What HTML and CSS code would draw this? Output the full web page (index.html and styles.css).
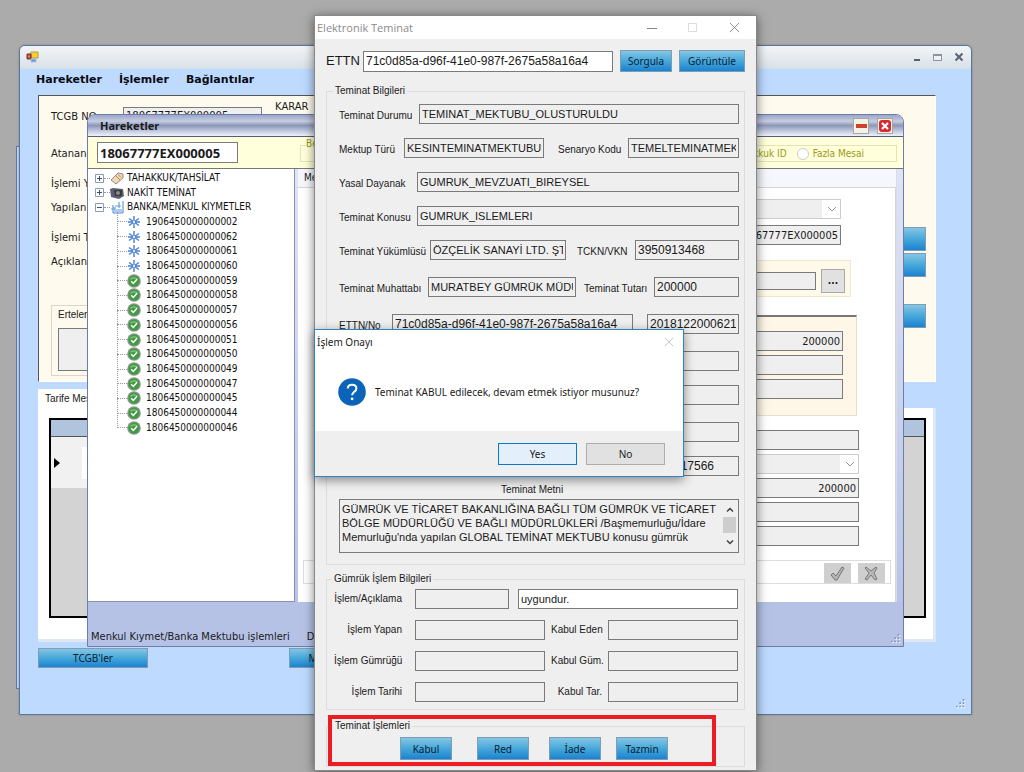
FILE: index.html
```html
<!DOCTYPE html>
<html lang="tr">
<head>
<meta charset="utf-8">
<title>Elektronik Teminat</title>
<link rel="stylesheet" href="styles.css">
</head>
<body>
<svg class="sprite" aria-hidden="true">
  <symbol id="star" viewBox="0 0 14 14"><path d="M7 1v12M2 3.500l10 7M2 10.500l10-7M1 7h12" stroke="#4a7fd0" stroke-width="1.400" fill="none"/><circle cx="7" cy="7" r="1.200" fill="#dfeafc"/></symbol>
  <symbol id="ok" viewBox="0 0 14 14"><circle cx="7" cy="7" r="6.800" fill="#8a968b"/><circle cx="7" cy="7" r="5.500" fill="#3f9a43"/><path d="M3.500 5.400a4 3 0 0 1 7 0" stroke="#8ccb8a" stroke-width="1.400" fill="none"/><path d="M4.200 7.200l2.100 2.200 3.700-4.200" stroke="#fff" stroke-width="1.500" fill="none"/></symbol>
  <symbol id="grip" viewBox="0 0 12 12"><g fill="#fff"><path d="M9 1h2v2H9zM5 5h2v2H5zM9 5h2v2H9zM1 9h2v2H1zM5 9h2v2H5zM9 9h2v2H9z"/></g><g fill="#7f93b8"><path d="M8 0h2v2H8zM4 4h2v2H4zM8 4h2v2H8zM0 8h2v2H0zM4 8h2v2H4zM8 8h2v2H8z"/></g></symbol>
  <symbol id="close" viewBox="0 0 12 12"><path d="M1 1l10 10M11 1L1 11" stroke="currentColor" fill="none"/></symbol>
</svg>
<div class="desktop">
  <div class="ghost"></div>

  <section class="win main">
    <header class="main-title">
      <svg width="13" height="12" viewBox="0 0 13 12"><path d="M5 1h7v6H5z" fill="#f5cf3a" stroke="#b99a35"/><path d="M1 3h4v5H1z" fill="#b33a2c" stroke="#7d3a34"/><path d="M2.500 4.500h1v2h-1z" fill="#f4d5cd"/><path d="M5 8h5v3H5z" fill="#5b9bea" stroke="#b0bfd4"/></svg>
      <span class="spacer"></span>
      <button class="bare" aria-label="Küçült"><svg width="10" height="10" viewBox="0 0 10 10"><path d="M2 8h6" stroke="#596273" stroke-width="2"/></svg></button>
      <button class="bare" aria-label="Büyüt"><svg width="10" height="10" viewBox="0 0 10 10"><path d="M.5 2.500h8v6h-8z" fill="#eef1f4" stroke="#8d939e"/><path d="M0 3h9" stroke="#8d939e" stroke-width="2"/></svg></button>
      <button class="bare" aria-label="Kapat"><svg width="10" height="10" viewBox="0 0 10 10"><path d="M1.500 1.500l7 7M8.500 1.500l-7 7" stroke="#596273" stroke-width="2"/></svg></button>
    </header>
    <nav class="menu"><a href="#">Hareketler</a><a href="#">İşlemler</a><a href="#">Bağlantılar</a></nav>
    <div class="main-body">
      <div class="decl">
        <div class="decl-fields">
          <div class="decl-row"><label for="tcgb">TCGB NO</label><input id="tcgb" value="18067777EX000005" readonly><span class="karar">KARAR</span></div>
          <label class="g22">Atanan</label>
          <label class="g16">İşlemi Y</label>
          <label class="g10">Yapılan</label>
          <label class="g16">İşlemi T</label>
          <label class="g10">Açıklan</label>
          <div class="delayed"><label for="ert">Ertelen</label><textarea id="ert" readonly></textarea></div>
        </div>
        <div class="decl-actions"><button class="blue" aria-label="Ara"></button><button class="blue" aria-label="Seç"></button><button class="blue last" aria-label="Tamam"></button></div>
      </div>
      <div class="tabs"><button class="tab">Tarife Mes</button></div>
      <div class="tabpage">
        <div class="gridbox"><div class="gridhead"></div><div class="gridrow"><svg width="6" height="10" viewBox="0 0 6 10"><path d="M0 0l6 5-6 5z"/></svg><span class="cell">1<br>1</span></div></div>
      </div>
      <div class="main-actions"><button class="blue">TCGB'ler</button><button class="blue">M</button></div>
    </div>
    <svg class="grip main-grip" width="10" height="10"><use href="#grip"/></svg>
  </section>

  <section class="win moves">
    <header class="moves-title"><h2>Hareketler</h2>
      <button class="cap" aria-label="Küçült"><svg width="11" height="4" viewBox="0 0 11 4"><path d="M0 0h11v4H0z" fill="#d0412c"/></svg></button>
      <button class="cap" aria-label="Kapat"><svg width="12" height="12" viewBox="0 0 12 12"><rect width="12" height="12" rx="3" fill="#d92a34"/><path d="M3 3l6 6M9 3L3 9" stroke="#fff" stroke-width="2.200"/></svg></button>
    </header>
    <div class="search"><input aria-label="Beyanname No" value="18067777EX000005">
      <div class="options"><span class="options-legend">Be</span><label><input type="radio" name="k" disabled>Tahakkuk ID</label><label><input type="radio" name="k" disabled>Fazla Mesai</label></div>
    </div>
    <div class="split">
      <div class="treebox"><ul class="tree">
        <li><svg class="pm" viewBox="0 0 9 9"><path d="M.5.500h8v8h-8z" fill="#fff" stroke="#8f9bb0"/><path d="M2 4.500h5M4.500 2v5" stroke="#35507c"/></svg><i></i><svg class="ic" viewBox="0 0 14 14"><path d="M1 9l7-7 5 1v4l-7 6z" fill="#f1d8b4" stroke="#8b8a94"/><path d="M6 5l4 4M8 3.500l3 3" stroke="#c18848"/></svg>TAHAKKUK/TAHSİLAT</li>
        <li><svg class="pm" viewBox="0 0 9 9"><path d="M.5.500h8v8h-8z" fill="#fff" stroke="#8f9bb0"/><path d="M2 4.500h5M4.500 2v5" stroke="#35507c"/></svg><i></i><svg class="ic" viewBox="0 0 14 14"><path d="M0 3l3-1 10 1 1 7-5 3-8-2z" fill="#5a5f77"/><path d="M4 4h8v6H5z" fill="#3b3a3c"/><circle cx="8" cy="7" r="2" fill="#8d8b86"/></svg>NAKİT TEMİNAT</li>
        <li><svg class="pm" viewBox="0 0 9 9"><path d="M.5.500h8v8h-8z" fill="#fff" stroke="#8f9bb0"/><path d="M2 4.500h5" stroke="#35507c"/></svg><i></i><svg class="ic" viewBox="0 0 14 14"><path d="M3 5v8h10V1M9 2v6M6 8H3" fill="none" stroke="#4c86cf"/><path d="M4 9h8v3H4z" fill="#a9cbf5"/><path d="M1 9h4M5 6h6" stroke="#6b9cdc"/></svg>BANKA/MENKUL KIYMETLER</li>
        <li class="branch"><ul>
          <li><i></i><svg class="ic"><use href="#star"/></svg>1906450000000002</li>
          <li><i></i><svg class="ic"><use href="#star"/></svg>1806450000000062</li>
          <li><i></i><svg class="ic"><use href="#star"/></svg>1806450000000061</li>
          <li><i></i><svg class="ic"><use href="#star"/></svg>1806450000000060</li>
          <li><i></i><svg class="ic"><use href="#ok"/></svg>1806450000000059</li>
          <li><i></i><svg class="ic"><use href="#ok"/></svg>1806450000000058</li>
          <li><i></i><svg class="ic"><use href="#ok"/></svg>1806450000000057</li>
          <li><i></i><svg class="ic"><use href="#ok"/></svg>1806450000000056</li>
          <li><i></i><svg class="ic"><use href="#ok"/></svg>1806450000000051</li>
          <li><i></i><svg class="ic"><use href="#ok"/></svg>1806450000000050</li>
          <li><i></i><svg class="ic"><use href="#ok"/></svg>1806450000000049</li>
          <li><i></i><svg class="ic"><use href="#ok"/></svg>1806450000000047</li>
          <li><i></i><svg class="ic"><use href="#ok"/></svg>1806450000000045</li>
          <li><i></i><svg class="ic"><use href="#ok"/></svg>1806450000000044</li>
          <li><i></i><svg class="ic"><use href="#ok"/></svg>1806450000000046</li>
        </ul></li>
      </ul></div>
      <div class="detail">
        <div class="detail-head">Me</div>
        <div class="detail-page">
          <div class="block first"><select aria-label="Tür" disabled><option></option></select><input aria-label="Beyanname" value="18067777EX000005" readonly></div>
          <div class="pick"><input aria-label="Banka" readonly><button>...</button></div>
          <div class="block sums"><input aria-label="Tutar" value="200000" readonly><input aria-label="Kullanılan" readonly><input aria-label="Kalan" readonly></div>
          <div class="block lower"><input aria-label="Referans" readonly><select aria-label="Döviz" disabled><option></option></select><input aria-label="Toplam" value="200000" readonly><input aria-label="Tarih" readonly><input aria-label="Not" readonly></div>
          <div class="confirm">
            <button aria-label="Onayla"><svg width="15" height="15" viewBox="0 0 15 15"><path d="M1 9l2-2 3 3 6-9 2 1-7 12H5z" fill="#b4b4b4" stroke="#777"/></svg></button>
            <button aria-label="Vazgeç"><svg width="15" height="15" viewBox="0 0 15 15"><path d="M2 1l5 4 5-4 1 1-3 5 3 6-2 1-4-5-4 5-2-1 4-6-4-5z" fill="#b8b8b8" stroke="#777"/></svg></button>
          </div>
        </div>
      </div>
    </div>
    <footer class="moves-foot"><span>Menkul Kıymet/Banka Mektubu işlemleri</span><span>Durum</span></footer>
    <svg class="grip moves-grip" width="10" height="10"><use href="#grip"/></svg>
  </section>

  <section class="win bond">
    <header class="bond-title"><h2>Elektronik Teminat</h2>
      <button class="bare" aria-label="Küçült"><svg width="10" height="10" viewBox="0 0 10 10"><path d="M0 5.500h10" stroke="#888"/></svg></button>
      <button class="bare" aria-label="Büyüt"><svg width="10" height="10" viewBox="0 0 10 10"><path d="M.5.500h8v8h-8z" stroke="#ddd" fill="none"/></svg></button>
      <button class="bare grey" aria-label="Kapat"><svg width="11" height="11"><use href="#close"/></svg></button>
    </header>
    <div class="bond-body">
      <div class="ettn"><label for="ettn">ETTN</label><input id="ettn" value="71c0d85a-d96f-41e0-987f-2675a58a16a4"><button class="blue">Sorgula</button><button class="blue wide">Görüntüle</button></div>
      <fieldset class="info"><legend>Teminat Bilgileri</legend>
        <div class="row"><label class="l80" for="f1">Teminat Durumu</label><input class="caps" id="f1" value="TEMINAT_MEKTUBU_OLUSTURULDU" readonly></div>
        <div class="row"><label class="l65" for="f2">Mektup Türü</label><input class="caps" id="f2" value="KESINTEMINATMEKTUBU" readonly><label class="second l70" for="f3">Senaryo Kodu</label><input class="caps w111" id="f3" value="TEMELTEMINATMEKTUBU" readonly></div>
        <div class="row"><label class="l78" for="f4">Yasal Dayanak</label><input class="caps" id="f4" value="GUMRUK_MEVZUATI_BIREYSEL" readonly></div>
        <div class="row"><label class="l78" for="f5">Teminat Konusu</label><input class="caps" id="f5" value="GUMRUK_ISLEMLERI" readonly></div>
        <div class="row"><label class="l91" for="f6">Teminat Yükümlüsü</label><input class="caps" id="f6" value="ÖZÇELİK SANAYİ LTD. ŞTİ" readonly><label class="mid l58" for="f7">TCKN/VKN</label><input class="w104" id="f7" value="3950913468" readonly></div>
        <div class="row far"><label class="l89" for="f8">Teminat Muhattabı</label><input class="caps" id="f8" value="MURATBEY GÜMRÜK MÜDÜRLÜĞÜ" readonly><label class="near l70" for="f9">Teminat Tutarı</label><input class="w85" id="f9" value="200000" readonly></div>
        <div class="row far"><label class="l53" for="f10">ETTN/No</label><input id="f10" value="71c0d85a-d96f-41e0-987f-2675a58a16a4" readonly><input class="second w92" aria-label="No" value="20181220006210" readonly></div>
        <div class="row far"><input aria-label="Başlangıç" readonly></div>
        <div class="row"><input aria-label="Bitiş" readonly></div>
        <div class="row far"><input aria-label="Süre" readonly></div>
        <div class="row"><input class="code" aria-label="Referans" value="17566" readonly></div>
        <label class="text-label" for="txt">Teminat Metni</label>
        <div class="text-wrap"><textarea id="txt" readonly>GÜMRÜK VE TİCARET BAKANLIĞINA BAĞLI TÜM GÜMRÜK VE TİCARET
BÖLGE MÜDÜRLÜĞÜ VE BAĞLI MÜDÜRLÜKLERİ /Başmemurluğu/İdare
Memurluğu'nda yapılan GLOBAL TEMİNAT MEKTUBU konusu gümrük</textarea><div class="bar"><svg width="8" height="5" viewBox="0 0 8 5"><path d="M1 4.500l3-3 3 3" stroke="#444" stroke-width="1.500" fill="none"/></svg><b></b><svg width="8" height="5" viewBox="0 0 8 5"><path d="M1 .5l3 3 3-3" stroke="#444" stroke-width="1.500" fill="none"/></svg></div></div>
      </fieldset>
      <fieldset class="customs"><legend>Gümrük İşlem Bilgileri</legend>
        <div class="crow note"><label for="c1">İşlem/Açıklama</label><input id="c1" readonly><input class="edit" aria-label="Açıklama" value="uygundur."></div>
        <div class="crow"><label for="c2">İşlem Yapan</label><input id="c2" readonly><label for="c3">Kabul Eden</label><input id="c3" readonly></div>
        <div class="crow"><label for="c4">İşlem Gümrüğü</label><input id="c4" readonly><label for="c5">Kabul Güm.</label><input id="c5" readonly></div>
        <div class="crow"><label for="c6">İşlem Tarihi</label><input id="c6" readonly><label for="c7">Kabul Tar.</label><input id="c7" readonly></div>
      </fieldset>
      <fieldset class="ops"><legend>Teminat İşlemleri</legend>
        <div class="ops-row"><button class="blue">Kabul</button><button class="blue">Red</button><button class="blue">İade</button><button class="blue">Tazmin</button></div>
        <div class="marker"></div>
      </fieldset>
    </div>
  </section>

  <section class="win confirm-box" role="dialog" aria-label="İşlem Onayı">
    <header><h2>İşlem Onayı</h2><button class="bare pale" aria-label="Kapat"><svg width="10" height="10"><use href="#close"/></svg></button></header>
    <div class="message"><svg width="28" height="28" viewBox="0 0 28 28"><circle cx="14" cy="14" r="13.800" fill="#0b64b8"/><path d="M9.800 10.500c0-5 8.600-5 8.600 0 0 3.300-4.300 3.200-4.300 6.800" fill="none" stroke="#fff" stroke-width="2"/><circle cx="14.100" cy="20.800" r="1.400" fill="#fff"/></svg><p>Teminat KABUL edilecek, devam etmek istiyor musunuz?</p></div>
    <div class="answer"><button class="yes">Yes</button><button>No</button></div>
  </section>
</div>
</body>
</html>
```
FILE: styles.css
```css
* { box-sizing: border-box; }
body { margin: 0; font: 10px/14px "Liberation Sans", Arial, sans-serif; color: #1a1a1a; }
button, input, textarea, select { font: inherit; color: inherit; margin: 0; border-radius: 0; }
h2, p, ul { margin: 0; padding: 0; }
li { list-style: none; }
.sprite { position: absolute; width: 0; height: 0; }
svg { flex: none; display: block; }
.desktop { position: relative; min-height: 100vh; background: #ababab; overflow: hidden; }
.win { position: absolute; }
.bare { background: none; border: 0; padding: 0; }
input, textarea { border: 1px solid #7a7a7a; background: #efefef; padding: 0 2px; min-width: 0; outline: 0; }
.blue { border: 1px solid #7d9db5; background: linear-gradient(#86c5e4, #46a8da 50%, #1c82d0); color: #0c2034; padding: 0; font-family: "Noto Sans", sans-serif; font-size: 10px; }
.spacer { flex: 1; }
.grip { position: absolute; right: 2px; bottom: 2px; }
.main-grip { right: 5px; bottom: 5px; }

/* outer frame behind the main window */
.ghost { position: absolute; left: 16px; top: 146px; width: 8px; height: 543px; background: #bedaff; border: 1px solid #5d7699; }

/* main window */
.main { left: 19px; right: 52px; top: 45px; background: #bedaff; border: 1px solid #5d7699; border-radius: 6px 6px 0 0; box-shadow: 0 0 2px #777; font-family: "DejaVu Sans", sans-serif; }
.main-title { display: flex; align-items: center; height: 23px; padding: 0 7px 0 6px; gap: 11px; background: linear-gradient(#f2f5f7, #d9e1e7); border-bottom: 1px solid #cfe0ef; border-radius: 5px 5px 0 0; }
.menu { display: flex; gap: 17px; padding: 4px 16px 9px; }
.menu a { color: #0a0a14; text-decoration: none; font-size: 11px; font-weight: bold; line-height: 13px; }
.main-body { padding: 0 35px 46px 18px; }
.decl { display: flex; justify-content: space-between; min-height: 287px; background: #fffaee; border: 1px solid #fff; border-top-color: #555; border-left-color: #555; padding: 11px 9px 4px 12px; }
.decl-fields { display: flex; flex-direction: column; width: 300px; }
.decl-row { display: flex; height: 18px; }
.decl-row label { width: 72px; padding-top: 3px; }
.decl-row input { width: 139px; }
.karar { margin-top: -6px; padding-left: 13px; line-height: 12px; }
.g22 { margin-top: 22px; }
.g16 { margin-top: 16px; }
.g10 { margin-top: 10px; }
.delayed { display: flex; flex-direction: column; margin-top: 36px; padding: 2px 6px 4px; gap: 6px; height: 71px; border: 1px solid #ddd6c8; font-family: "Liberation Sans", sans-serif; }
.delayed textarea { flex: 1; resize: none; }
.decl-actions { display: flex; flex-direction: column; gap: 2px; padding-top: 120px; }
.decl-actions .blue { width: 90px; height: 24px; }
.decl-actions .last { margin-top: 25px; }
.tabs { display: flex; padding-top: 7px; height: 26px; }
.tab { border: 0; background: #fff; width: 150px; text-align: left; padding: 0 7px; font-family: "Liberation Sans", sans-serif; }
.tabpage { background: #fff; border-right: 3px solid #dfe7f2; border-bottom: 3px solid #dfe7f2; padding: 10px 7px 21px 11px; }
.gridbox { height: 200px; border: 2px solid #000; background: #d3d3d3; }
.gridhead { height: 17px; background: #b0c4de; border-bottom: 1px solid #555; }
.gridrow { display: flex; align-items: center; gap: 22px; height: 51px; width: 120px; padding-left: 3px; background: #f1f1f1; }
.cell { background: #fff; padding-left: 4px; line-height: 16px; }
.main-actions { display: flex; gap: 141px; padding-top: 6px; }
.main-actions .blue { width: 110px; height: 20px; }
.main-actions .blue + .blue { width: 48px; }

/* movements window */
.moves { left: 87px; right: 120px; top: 114px; background: linear-gradient(#e3e8f6, #b5c0e4); border: 1px solid #6b7da8; border-radius: 8px 8px 0 0; font-family: "DejaVu Sans Condensed", "DejaVu Sans", sans-serif; }
.moves-title { display: flex; align-items: center; gap: 8px; height: 22px; padding: 0 10px 0 12px; border-bottom: 1px solid #555d78; border-radius: 7px 7px 0 0; background: linear-gradient(#9ca6c8, #c6cde2 30%, #8d97b8 50%, #c9d0e6 80%, #eef1fa); }
.moves-title h2 { flex: 1; font: bold 11px/14px "Noto Sans", sans-serif; }
.cap { display: grid; place-items: center; width: 16px; height: 16px; padding: 0; border: 1px solid #a6a99e; background: #f4f2e6; }
.search { display: flex; justify-content: space-between; height: 32px; padding: 5px 6px 5px 9px; background: #ffffdc; border-bottom: 1px solid #777; }
.search > input { width: 141px; height: 21px; background: #fff; font: bold 13px "Noto Sans", sans-serif; }
.options { display: flex; justify-content: flex-end; align-items: center; gap: 10px; width: 597px; height: 17px; margin-top: 3px; padding-right: 32px; border: 1px solid #e4e4b4; color: #9a9a10; position: relative; }
.options label { display: flex; align-items: center; gap: 4px; }
.options input { appearance: none; width: 12px; height: 12px; border: 1px solid #ccc; border-radius: 50%; background: #fff; }
.options-legend { position: absolute; left: 5px; top: -9px; background: #ffffdc; }
.split { display: flex; gap: 3px; padding-right: 6px; }
.treebox { width: 207px; height: 433px; background: #fff; border-right: 1px solid #8791b5; border-bottom: 1px solid #8791b5; padding: 2px 7px; }
.tree { display: flex; flex-direction: column; justify-content: space-between; height: 264px; }
.tree li { display: flex; align-items: center; height: 14px; white-space: nowrap; color: #111; }
.tree i { width: 6px; border-top: 1px dotted #999; }
.tree .ic { width: 14px; height: 14px; margin-right: 3px; }
.pm { width: 9px; height: 9px; }
.tree .branch { height: 220px; position: relative; }
.branch::before { content: ""; position: absolute; left: 22px; top: -3px; bottom: 7px; border-left: 1px dotted #999; }
.branch ul { display: flex; flex-direction: column; justify-content: space-between; height: 220px; padding-left: 22px; }
.branch i { width: 10px; }
.branch .ic { margin-right: 5px; }
.detail { flex: 1; min-width: 0; border-right: 1px solid #d8dbe8; }
.detail-head { height: 18px; padding: 2px 6px; background: #f5f7fc; }
.detail-page { display: flex; flex-direction: column; align-items: flex-end; background: #fff; border-top: 1px solid #d5d5d5; border-right: 1px solid #d5d5d5; padding: 11px 4px 18px 5px; }
.detail-page input, .detail-page select { width: 300px; height: 20px; font-size: 11px; text-align: right; }
.detail-page select { border: 1px solid #ccc; appearance: none; background: url("data:image/svg+xml,%3Csvg xmlns='http://www.w3.org/2000/svg' width='8' height='5'%3E%3Cpath d='M0 0l4 4 4-4' fill='none' stroke='%23999'/%3E%3C/svg%3E") no-repeat right 4px center, linear-gradient(to left, #fff 18px, #efefef 0); opacity: 1; }
.block { display: flex; flex-direction: column; }
.first { margin-right: 50px; gap: 6px; }
.pick { display: flex; gap: 5px; margin: 15px 40px 0 0; padding: 8px 5px 3px; background: #fff9ea; border: 1px solid #f1e7cd; }
.pick input { height: 18px; margin-top: 3px; }
.pick button { width: 24px; height: 24px; border: 1px solid #aaa; background: #e1e1e1; font-weight: bold; padding: 0; }
.sums { gap: 4px; margin: 18px 34px 0 0; padding: 14px 13px 16px; background: #fef6e6; border: 1px solid #e5dfd0; border-top: 2px solid #777; }
.lower { gap: 4px; margin: 14px 32px 0 0; }
.confirm { display: flex; justify-content: flex-end; gap: 7px; align-self: stretch; margin-top: 14px; padding: 2px 5px 0; border: 1px solid #ddd; }
.confirm button { display: grid; place-items: center; width: 27px; height: 20px; border: 0; background: #cfcfcf; padding: 0; }
.moves-foot { display: flex; gap: 17px; height: 44px; padding: 27px 3px 0; font-size: 11px; line-height: 16px; background: #b5c2e6; }

/* guarantee window */
.bond { left: 314px; right: 267px; top: 15px; background: #efefef; border: 1px solid #888; box-shadow: 0 2px 10px rgba(0,0,0,.5); }
.bond-title { display: flex; align-items: center; gap: 31px; height: 23px; padding: 0 16px 0 2px; background: #fff; color: #8b8b8b; }
.bond-title h2 { flex: 1; font: 11px/14px "Open Sans", sans-serif; }
.grey { color: #888; }
.bond-body { padding: 11px 11px 3px; }
.ettn { display: flex; align-items: center; gap: 7px; margin-bottom: 13px; padding-right: 0; }
.ettn label { width: 30px; font-size: 13px; }
.ettn input { flex: 1; height: 21px; background: #fff; font-size: 12px; }
.ettn .blue { width: 52px; height: 22px; }
.ettn .wide { width: 66px; }
fieldset { margin: 0; padding: 0; border: 1px solid #dcdcdc; min-width: 0; }
legend { padding: 0 2px; line-height: 12px; }
.row { display: flex; align-items: center; margin-top: 14px; }
.row input { flex: 1; height: 20px; font-size: 12px; }
.row .caps { font-size: 11px; }
.info { padding: 0 5px 11px 12px; }
.info .row:first-of-type { margin-top: 7px; }
.row.far { margin-top: 17px; }
.row label { white-space: nowrap; padding-top: 3px; }
.info legend { margin-left: -6px; }
.l53 { width: 53px; } .l58 { width: 58px; } .l65 { width: 65px; } .l70 { width: 70px; } .l78 { width: 78px; } .l80 { width: 80px; } .l89 { width: 89px; } .l91 { width: 91px; }
.row .second { margin-left: 14px; }
.row .mid { margin-left: 11px; }
.row .near { margin-left: 8px; }
.row .w85 { flex: 0 0 85px; } .row .w92 { flex: 0 0 92px; } .row .w104 { flex: 0 0 104px; } .row .w111 { flex: 0 0 111px; }
.code { text-align: right; }
.row .code { padding-right: 24px; }
.text-label { display: block; padding: 7px 14px 2px 0; text-align: center; }
.text-wrap { display: flex; height: 54px; border: 1px solid #7a7a7a; }
.text-wrap textarea { flex: 1; border: 0; resize: none; overflow: hidden; white-space: pre; font-size: 11px; line-height: 14px; padding: 2px; }
.bar { display: flex; flex-direction: column; align-items: center; gap: 5px; width: 17px; padding: 7px 0; }
.bar b { width: 13px; height: 16px; background: #cdcdcd; }
.bar svg:last-child { margin-top: auto; }
.customs { margin-top: 8px; padding: 4px 6px 7px 7px; }
.customs legend { margin-left: -2px; }
.crow { display: grid; grid-template-columns: 75px 1fr 51px 1fr; column-gap: 6px; align-items: center; margin-bottom: 11px; }
.crow:last-child { margin-bottom: 0; }
.crow label { text-align: right; white-space: nowrap; }
.crow label:first-child { padding-right: 7px; }
.crow input { height: 20px; font-size: 11px; }
.crow.note { grid-template-columns: 72px 94px 1fr; column-gap: 9px; }
.crow.note label { padding-right: 4px; }
.note .edit { background: #fff; }
.ops { position: relative; margin-top: 10px; padding: 5px 6px 6px 73px; }
.ops legend { margin-left: -67px; }
.ops-row { display: grid; grid-template-columns: 77px 72px 67px 52px; }
.ops .blue { width: 52px; height: 23px; }
.marker { position: absolute; left: 1px; right: 28px; top: -17px; bottom: 0; border: 4px solid #ec1c24; }

/* confirmation box */
.confirm-box { left: 314px; right: 340px; top: 329px; background: #fff; border: 1px solid #2e83c6; box-shadow: 0 3px 10px rgba(0,0,0,.45); font: 10px/14px "Noto Sans", sans-serif; }
.confirm-box header { display: flex; justify-content: space-between; align-items: center; height: 24px; padding: 0 9px 0 2px; }
.confirm-box h2 { font: inherit; }
.pale { color: #bbb; }
.message { display: flex; align-items: center; gap: 9px; padding: 24px 23px 25px; }
.answer { display: flex; justify-content: flex-end; gap: 9px; padding: 12px 18px 11px; background: #efefef; }
.answer button { width: 79px; height: 22px; padding: 0; border: 1px solid #adadad; background: #e1e1e1; }
.answer .yes { border-color: #0b78d0; background: #e3f0fb; }
```
